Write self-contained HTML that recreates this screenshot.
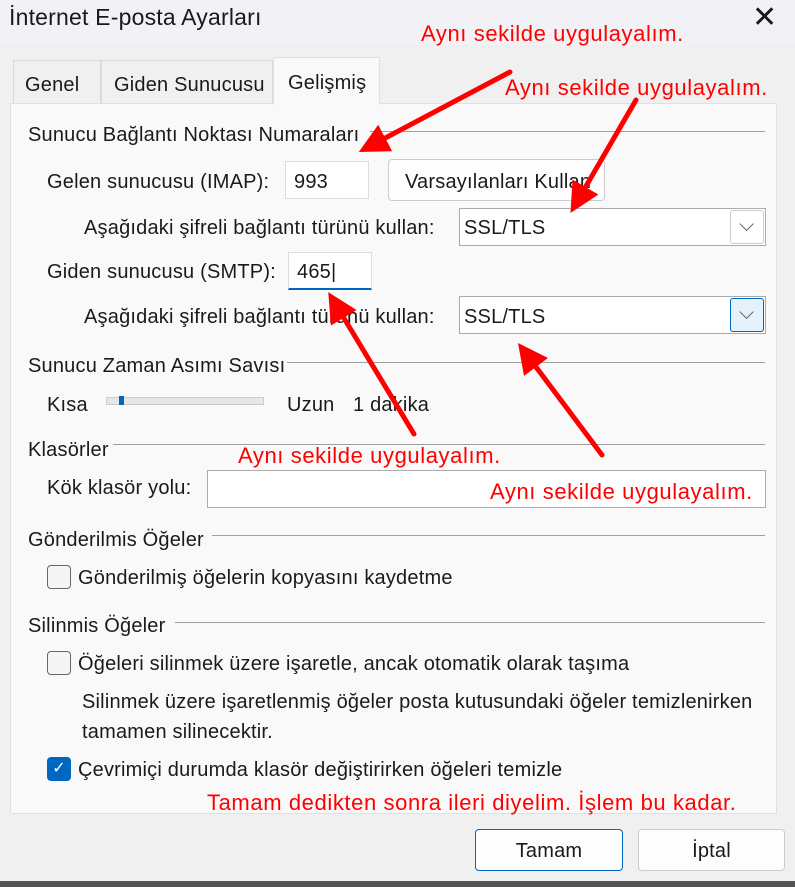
<!DOCTYPE html>
<html><head><meta charset="utf-8"><style>
*{margin:0;padding:0;box-sizing:border-box}
body{width:795px;height:887px;background:#f0f0f0;font-family:"Liberation Sans",sans-serif;font-size:20px;letter-spacing:0.2px;color:#1a1a1a;position:relative;overflow:hidden}
.a{position:absolute;white-space:nowrap}
.red{color:#f00;font-size:22px;letter-spacing:0.6px}
.line{position:absolute;height:1px;background:#a0a0a0}
.box{position:absolute;background:#fff;border:1px solid #ababab}
.cb{position:absolute;width:24px;height:24px;border:1.5px solid #666;border-radius:4px;background:#f5f5f5}
.btn{position:absolute;border:1px solid #ccc;border-radius:4px;background:#fdfdfd;text-align:center}
.dd{position:absolute;width:34px;height:34px;border:1px solid #ccc;border-radius:3px;background:#fff}
</style></head><body>
<div class="a" style="left:0;top:0;width:795px;height:45px;background:#f2f1f5"></div>
<div class="a" style="left:9px;top:4px;font-size:23px">İnternet E-posta Ayarları</div>
<div class="a" style="left:752px;top:0px;font-size:30px;font-weight:200">✕</div>
<div class="a" style="left:13px;top:60px;width:88px;height:44px;background:#f0f0f0;border:1px solid #d9d9d9;border-bottom:none"></div>
<div class="a" style="left:25px;top:74px">Genel</div>
<div class="a" style="left:101px;top:60px;width:172px;height:44px;background:#f0f0f0;border:1px solid #d9d9d9;border-bottom:none"></div>
<div class="a" style="left:114px;top:74px">Giden Sunucusu</div>
<div class="a" style="left:10px;top:103px;width:767px;height:711px;background:#f9f9f9;border:1px solid #e0e0e0"></div>
<div class="a" style="left:273px;top:57px;width:107px;height:48px;background:#f9f9f9;border:1px solid #e0e0e0;border-bottom:none"></div>
<div class="a" style="left:288px;top:72px">Gelişmiş</div>
<div class="a" style="left:28px;top:124px">Sunucu Bağlantı Noktası Numaraları</div>
<div class="line" style="left:370px;top:131px;width:395px"></div>
<div class="a" style="left:47px;top:171px">Gelen sunucusu (IMAP):</div>
<div class="box" style="left:285px;top:161px;width:84px;height:38px;border-color:#ddd"></div>
<div class="a" style="left:294px;top:171px">993</div>
<div class="btn" style="left:388px;top:159px;width:217px;height:42px"></div>
<div class="a" style="left:405px;top:171px">Varsayılanları Kullan</div>
<div class="a" style="left:84px;top:217px">Aşağıdaki şifreli bağlantı türünü kullan:</div>
<div class="box" style="left:459px;top:208px;width:307px;height:38px"></div>
<div class="a" style="left:464px;top:217px">SSL/TLS</div>
<div class="dd" style="left:730px;top:210px"></div>
<div class="a" style="left:739px;top:214px;color:#555">⌵</div>
<div class="a" style="left:47px;top:261px">Giden sunucusu (SMTP):</div>
<div class="box" style="left:288px;top:252px;width:84px;height:38px;border-color:#ddd;border-bottom:2px solid #0067c0"></div>
<div class="a" style="left:297px;top:261px">465|</div>
<div class="a" style="left:84px;top:306px">Aşağıdaki şifreli bağlantı türünü kullan:</div>
<div class="box" style="left:459px;top:296px;width:307px;height:38px"></div>
<div class="a" style="left:464px;top:306px">SSL/TLS</div>
<div class="dd" style="left:730px;top:298px;background:#e5f1fb;border-color:#0067c0"></div>
<div class="a" style="left:739px;top:302px;color:#555">⌵</div>
<div class="a" style="left:28px;top:355px">Sunucu Zaman Asımı Savısı</div>
<div class="line" style="left:287px;top:362px;width:478px"></div>
<div class="a" style="left:47px;top:394px">Kısa</div>
<div class="a" style="left:106px;top:397px;width:158px;height:8px;background:#e6e6e6;border:1px solid #ccc"></div>
<div class="a" style="left:119px;top:396px;width:5px;height:9px;background:#0067c0"></div>
<div class="a" style="left:287px;top:394px">Uzun</div>
<div class="a" style="left:353px;top:394px">1 dakika</div>
<div class="a" style="left:28px;top:439px">Klasörler</div>
<div class="line" style="left:113px;top:444px;width:652px"></div>
<div class="a" style="left:47px;top:477px">Kök klasör yolu:</div>
<div class="box" style="left:207px;top:470px;width:559px;height:38px"></div>
<div class="a" style="left:28px;top:529px">Gönderilmis Öğeler</div>
<div class="line" style="left:212px;top:535px;width:553px"></div>
<div class="cb" style="left:47px;top:565px"></div>
<div class="a" style="left:78px;top:567px">Gönderilmiş öğelerin kopyasını kaydetme</div>
<div class="a" style="left:28px;top:615px">Silinmis Öğeler</div>
<div class="line" style="left:175px;top:622px;width:590px"></div>
<div class="cb" style="left:47px;top:651px"></div>
<div class="a" style="left:78px;top:653px">Öğeleri silinmek üzere işaretle, ancak otomatik olarak taşıma</div>
<div class="a" style="left:82px;top:691px">Silinmek üzere işaretlenmiş öğeler posta kutusundaki öğeler temizlenirken</div>
<div class="a" style="left:82px;top:721px">tamamen silinecektir.</div>
<div class="cb" style="left:47px;top:757px;background:#0067c0;border-color:#0067c0;color:#fff;font-size:16px;text-align:center;line-height:21px">✓</div>
<div class="a" style="left:78px;top:759px">Çevrimiçi durumda klasör değiştirirken öğeleri temizle</div>
<div class="btn" style="left:475px;top:829px;width:148px;height:42px;border-color:#0067c0;line-height:42px">Tamam</div>
<div class="btn" style="left:638px;top:829px;width:147px;height:42px;line-height:42px">İptal</div>
<div class="a" style="left:0;top:881px;width:795px;height:6px;background:#555"></div>
<div class="a red" style="left:421px;top:21px">Aynı sekilde uygulayalım.</div>
<div class="a red" style="left:505px;top:75px">Aynı sekilde uygulayalım.</div>
<div class="a red" style="left:238px;top:443px">Aynı sekilde uygulayalım.</div>
<div class="a red" style="left:490px;top:479px">Aynı sekilde uygulayalım.</div>
<div class="a red" style="left:207px;top:790px">Tamam dedikten sonra ileri diyelim. İşlem bu kadar.</div>
<svg class="a" style="left:0;top:0" width="795" height="887">
<defs><marker id="h" markerWidth="6" markerHeight="6" refX="3" refY="3" orient="auto"><path d="M0,0 L6,3 L0,6 z" fill="#f00"/></marker></defs>
<g stroke="#f00" stroke-width="5" stroke-linecap="round" marker-end="url(#h)">
<line x1="510" y1="72" x2="372" y2="145"/>
<line x1="636" y1="100" x2="578" y2="200"/>
<line x1="414" y1="434" x2="336" y2="305"/>
<line x1="602" y1="455" x2="527" y2="355"/>
</g></svg>
</body></html>
